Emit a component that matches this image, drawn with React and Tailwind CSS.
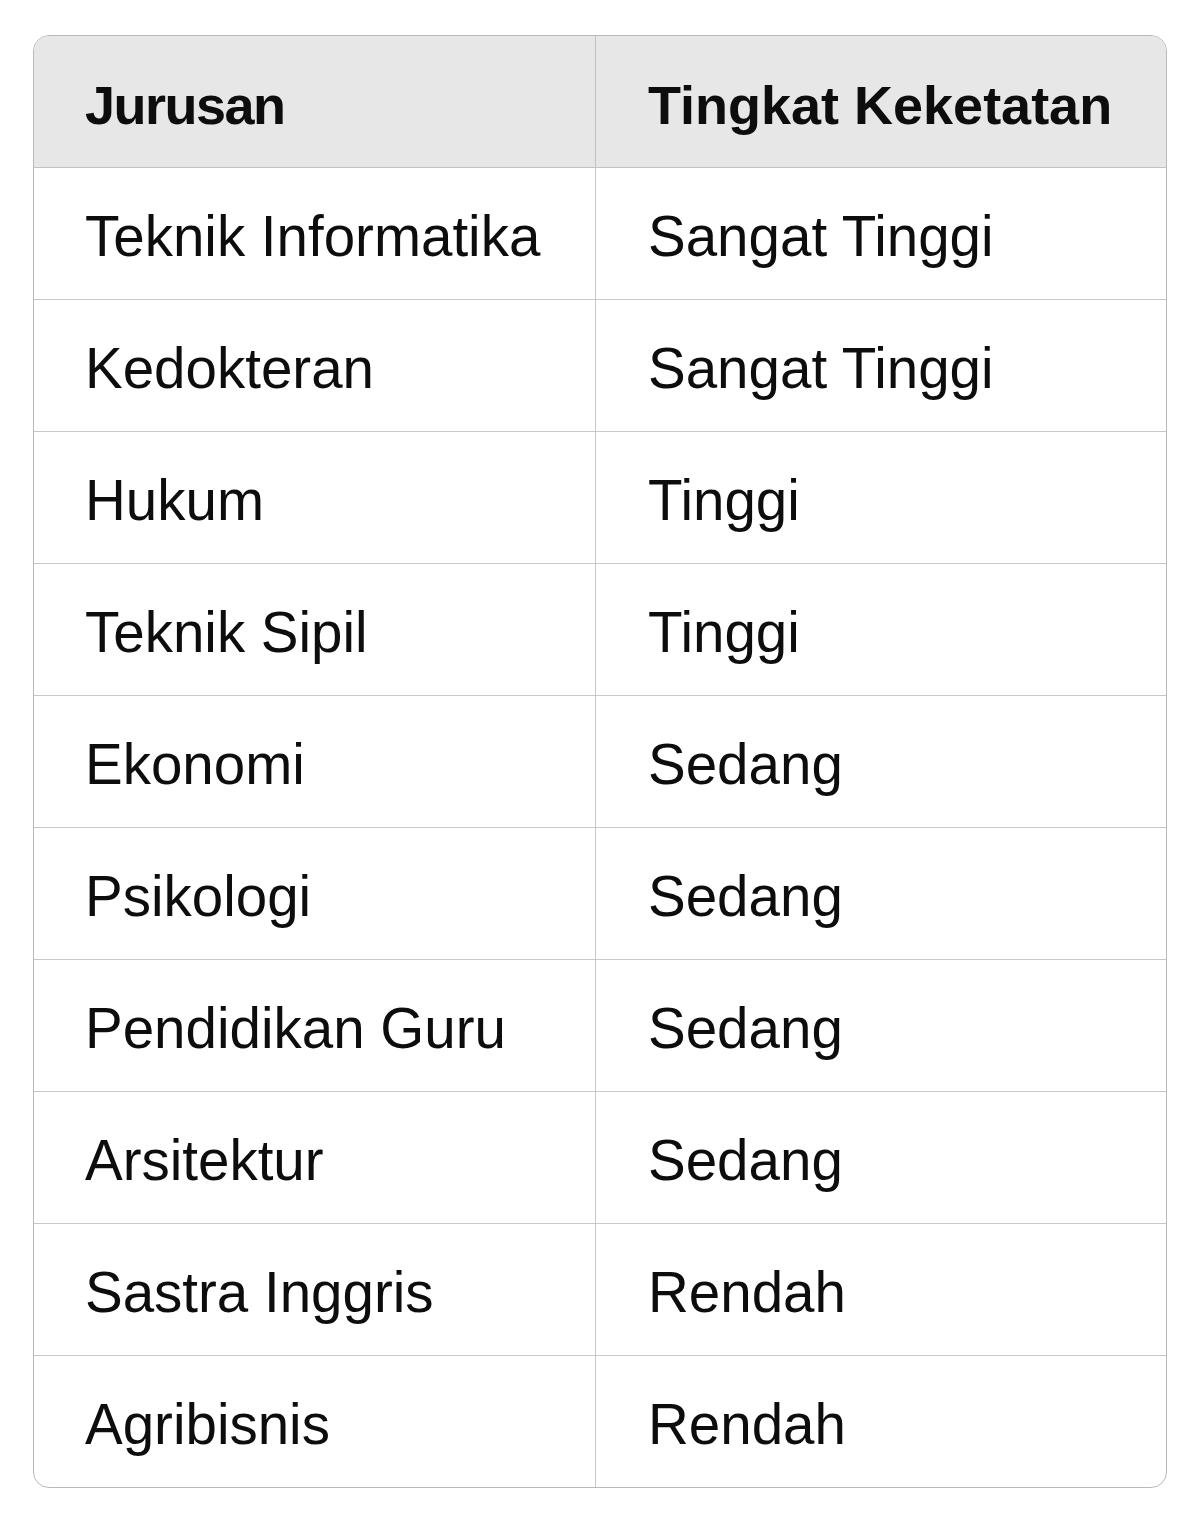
const rows = [
  ["Teknik Informatika", "Sangat Tinggi"],
  ["Kedokteran", "Sangat Tinggi"],
  ["Hukum", "Tinggi"],
  ["Teknik Sipil", "Tinggi"],
  ["Ekonomi", "Sedang"],
  ["Psikologi", "Sedang"],
  ["Pendidikan Guru", "Sedang"],
  ["Arsitektur", "Sedang"],
  ["Sastra Inggris", "Rendah"],
  ["Agribisnis", "Rendah"],
];

export default function App() {
  return (
    <div className="min-h-screen bg-white pt-[35px] pl-[33px] font-['Liberation_Sans',Arial,sans-serif] text-[#0d0d0d]">
      <div className="w-[1134px] border border-[#b9b9b9] rounded-[16px] overflow-hidden">
        {/* Header */}
        <div className="grid grid-cols-[562px_1fr] h-[132px] bg-[#e7e7e7] border-b border-[#c2c2c2]">
          <div className="flex items-center pl-[51px] pt-[8px] border-r border-[#c2c2c2] text-[54px] font-bold tracking-[-1.5px]">
            Jurusan
          </div>
          <div className="flex items-center pl-[52px] pt-[8px] text-[54px] font-bold">
            Tingkat Keketatan
          </div>
        </div>

        {rows.map(([jurusan, tingkat], i) => (
          <div
            key={jurusan}
            className={
              i === rows.length - 1
                ? "grid grid-cols-[562px_1fr] h-[131px]"
                : "grid grid-cols-[562px_1fr] h-[132px] border-b border-[#c8c8c8]"
            }
          >
            <div className="flex items-center pl-[51px] pt-[8px] border-r border-[#c8c8c8] text-[56.5px]">
              {jurusan}
            </div>
            <div className="flex items-center pl-[52px] pt-[8px] text-[56.5px]">{tingkat}</div>
          </div>
        ))}
      </div>
    </div>
  );
}
